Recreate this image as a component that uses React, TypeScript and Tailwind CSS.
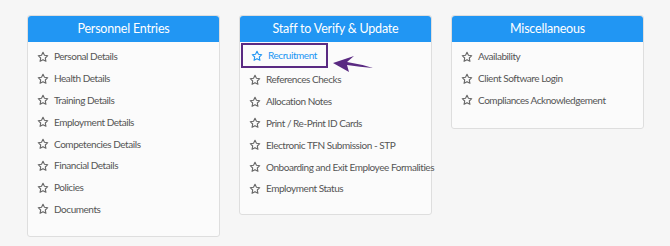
const font = { fontFamily: '"Lato", "Open Sans", sans-serif' };

function Star({ active }: { active?: boolean }) {
  return (
    <svg width="12" height="12" viewBox="0 0 24 24" fill="none" stroke={active ? "#2196f3" : "#666"} strokeWidth="2.2" strokeLinejoin="round" className="shrink-0">
      <path d="M12 2.5l2.9 6.1 6.6.8-4.9 4.6 1.3 6.6L12 17.3l-5.9 3.3 1.3-6.6L2.5 9.4l6.6-.8z" />
    </svg>
  );
}

function Item({ label, active }: { label: string; active?: boolean }) {
  return (
    <div className="flex items-center gap-[5px] h-[21.8px] text-[10px] tracking-[-0.45px] whitespace-nowrap">
      <Star active={active} />
      <span className={active ? "text-[#2196f3]" : "text-[#555]"}>{label}</span>
    </div>
  );
}

function Card({ title, items, minH, children }: { title: string; items: string[]; minH: string; children?: React.ReactNode }) {
  return (
    <div className={`w-[193px] bg-[#fbfbfb] border border-[#dedede] rounded-[3px] ${minH}`}>
      <div className="h-[26px] bg-[#2196f3] rounded-t-[3px] flex items-center justify-center text-white text-[12.5px] tracking-[-0.2px]">
        {title}
      </div>
      <div className="px-[9px] pt-[4px]">
        {children}
        {items.map((i) => (
          <Item key={i} label={i} />
        ))}
      </div>
    </div>
  );
}

export default function App() {
  return (
    <div className="w-[670px] h-[246px] bg-[#f6f6f6] pt-[15px] pl-[27px]" style={font}>
      <div className="flex gap-[19px] items-start">
        <Card
          title="Personnel Entries"
          minH="h-[222px]"
          items={[
            "Personal Details",
            "Health Details",
            "Training Details",
            "Employment Details",
            "Competencies Details",
            "Financial Details",
            "Policies",
            "Documents",
          ]}
        />
        <Card
          title="Staff to Verify & Update"
          minH="h-[200px]"
          items={[
            "References Checks",
            "Allocation Notes",
            "Print / Re-Print ID Cards",
            "Electronic TFN Submission - STP",
            "Onboarding and Exit Employee Formalities",
            "Employment Status",
          ]}
        >
          <div className="relative -mx-[8px] mt-[-3px] mb-[1px] w-[87px] h-[25px] border-2 border-[#5a2a82] flex items-center px-[8px] gap-[5px] text-[10px] tracking-[-0.45px]">
            <Star active />
            <span className="text-[#2196f3]">Recruitment</span>
            <svg className="absolute left-[89px] top-[9px]" width="42" height="20" viewBox="0 0 42 20">
              <path d="M1 9 L22 2 L15 8 Q28 10 41 14 Q28 13 15 11 L17 18 Z" fill="#5a2a82" />
            </svg>
          </div>
        </Card>
        <Card
          title="Miscellaneous"
          minH="h-[114px]"
          items={["Availability", "Client Software Login", "Compliances Acknowledgement"]}
        />
      </div>
    </div>
  );
}
